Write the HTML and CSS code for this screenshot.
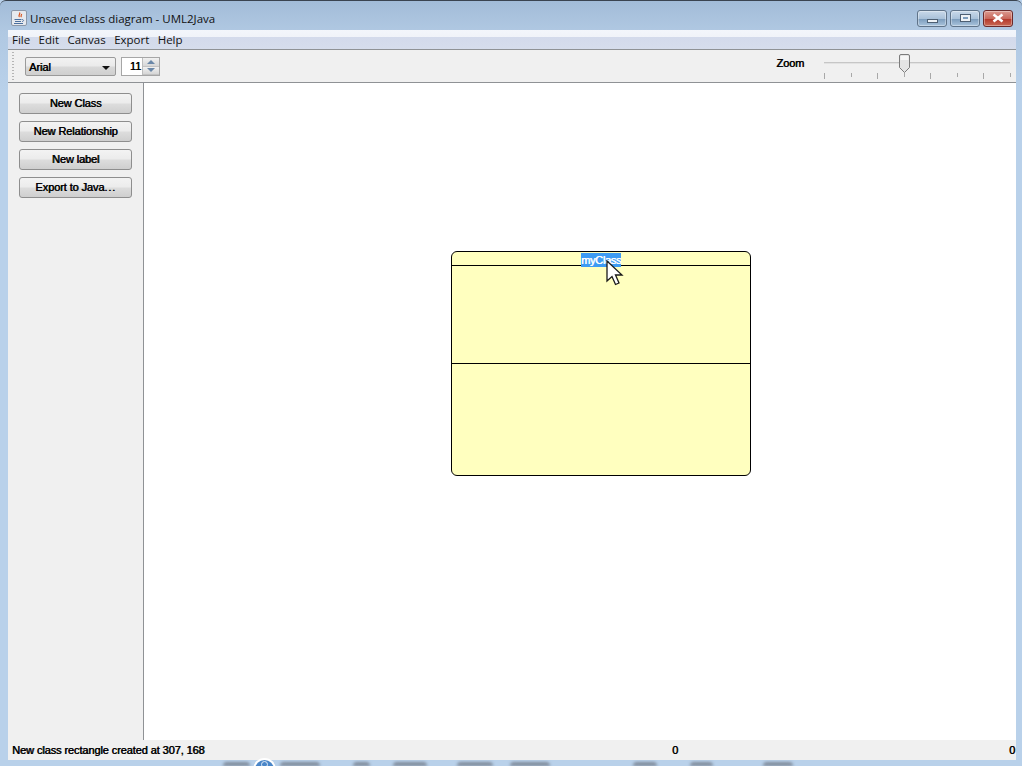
FILE: index.html
```html
<!DOCTYPE html>
<html lang="en">
<head>
    <meta charset="UTF-8">
    <title>Unsaved class diagram - UML2Java</title>
    <link rel="stylesheet" href="styles.css">
</head>
<body>

<div class="window">
    <div class="titlebar">
        <svg class="app-icon" width="16" height="16" viewBox="0 0 16 16">
            <rect x="0.5" y="0.5" width="15" height="15" rx="1.5" fill="#e6e9ee" stroke="#8b97a8"/>
            <path d="M8.5 2.5c1.5 1.5-2 3 0 4.5M10.5 4c.5 1-1.5 2 0 3" fill="none" stroke="#d8541e" stroke-width="1.2"/>
            <path d="M3.5 9.5h7M4 11.5h6M3 13.5h9" stroke="#4a6f9e" stroke-width="1"/>
            <path d="M11 9.5c2 0 2 2 0 2" fill="none" stroke="#4a6f9e"/>
        </svg>
        <span class="title-text">Unsaved class diagram - UML2Java</span>
        <div class="win-buttons">
            <div class="win-btn"><span class="min-glyph"></span></div>
            <div class="win-btn"><span class="max-glyph"></span></div>
            <div class="win-btn close-btn">
                <svg width="16" height="10" viewBox="0 0 16 10">
                    <path d="M3.5 1.500l9 7M12.500 1.500l-9 7" stroke="#fff" stroke-width="2.600"/>
                </svg>
            </div>
        </div>
    </div>

    <div class="menubar">
        <span>File</span>
        <span>Edit</span>
        <span>Canvas</span>
        <span>Export</span>
        <span>Help</span>
    </div>

    <div class="toolbar">
        <div class="grip"></div>
        <div class="font-select">
            <span>Arial</span>
            <span class="arrow-down"></span>
        </div>
        <div class="spinner">
            <span class="spin-value">11</span>
            <div class="spin-btns">
                <div class="spin-btn"><span class="spin-up"></span></div>
                <div class="spin-btn"><span class="spin-down"></span></div>
            </div>
        </div>
        <div class="zoom-label">Zoom</div>
        <div class="slider">
            <div class="slider-track"></div>
            <svg class="slider-thumb" width="11" height="19" viewBox="0 0 11 19">
                <path d="M.5 2Q.5.5 2 .5H9Q10.500 .5 10.500 2V13.500L5.500 18.500L.5 13.500Z" fill="#e4e4e4" stroke="#7b7b7b"/>
                <path d="M1.500 2H9.500V6H1.500Z" fill="#f6f6f6"/>
            </svg>
            <div class="ticks">
                <i></i><i class="minor"></i><i></i><i class="minor"></i><i></i><i class="minor"></i><i></i><i class="minor"></i>
            </div>
        </div>
    </div>

    <div class="main">
        <div class="sidebar">
            <button class="side-btn">New Class</button>
            <button class="side-btn">New Relationship</button>
            <button class="side-btn">New label</button>
            <button class="side-btn">Export to Java<span class="dots">...</span></button>
        </div>
        <div class="canvas">
            <div class="uml-class">
                <div class="uml-name"><span class="selected-name">myClass</span></div>
                <div class="uml-attrs"></div>
                <div class="uml-methods"></div>
            </div>
            <svg class="cursor" width="18" height="26" viewBox="0 0 18 26">
                <path d="M1 1V21L6 16.500L9.500 24.500L13 23L9.500 15H16Z" fill="#fff" stroke="#1a1a1a" stroke-width="1.300"/>
            </svg>
        </div>
    </div>

    <div class="statusbar">
        <span class="status-msg">New class rectangle created at 307, 168</span>
        <span class="status-x">0</span>
        <span class="status-y">0</span>
    </div>
</div>

<div class="desktop-strip">
    <i class="blob"></i>
    <i class="blob"></i>
    <i class="blob"></i>
    <i class="blob"></i>
    <i class="blob"></i>
    <i class="blob"></i>
    <i class="blob"></i>
    <i class="blob"></i>
    <i class="blob"></i>
</div>
<i class="orb"></i>

</body>
</html>
```

FILE: styles.css
```css
html, body {
    margin: 0;
    padding: 0;
    width: 1022px;
    height: 766px;
    overflow: hidden;
}

body {
    font-family: 'Liberation Sans', Arial, sans-serif;
    font-size: 12px;
    color: #000;
    background-color: #b9d1ea;
}

/* java draws these labels as a smeared regular weight, not a real bold */
.font-select, .spin-value, .zoom-label, .side-btn, .statusbar, .selected-name {
    font-family: 'Liberation Sans', Arial, sans-serif;
    font-size: 11px;
    font-weight: normal;
    letter-spacing: -0.1px;
    text-shadow: 0.6px 0 0 currentColor;
}

.window {
    height: 760px;
    display: flex;
    flex-direction: column;
    padding: 0 6px 0 8px;
    box-sizing: border-box;
    background: linear-gradient(to bottom, #a2bcd8 0, #b0c8e2 30px, #b9d1ea 90px);
    border-top: 1px solid #3a4450;
    border-radius: 6px 6px 0 0;
}

.titlebar {
    height: 29px;
    padding-top: 5px;
    box-sizing: border-box;
    display: flex;
    align-items: center;
    flex-shrink: 0;
    margin-left: 3px;
}

.app-icon {
    margin-right: 3px;
}

.title-text {
    font-family: 'Open Sans', 'Liberation Sans', sans-serif;
    font-size: 11.500px;
    color: #111;
}

.win-buttons {
    margin-left: auto;
    margin-right: 3px;
    display: flex;
    gap: 3px;
}

.win-btn {
    width: 28px;
    height: 15px;
    border: 1px solid #5f7389;
    border-radius: 3px;
    display: flex;
    align-items: center;
    justify-content: center;
    background: linear-gradient(to bottom, #c9d9ea 0, #aac2da 50%, #7d9dbd 55%, #a9c4dd 100%);
    box-shadow: inset 0 0 0 1px rgba(255, 255, 255, 0.35);
}

.close-btn {
    border-color: #6b2a2a;
    background: linear-gradient(to bottom, #dc9a90 0, #c9695c 50%, #b4392c 55%, #c96a55 100%);
}

.min-glyph {
    width: 9px;
    height: 2px;
    margin-top: 5px;
    background-color: #eef2f6;
    border: 1px solid #4d5f73;
}

.max-glyph {
    width: 5px;
    height: 2px;
    border: 2px solid #eef2f6;
    outline: 1px solid #4d5f73;
    background-color: #7d9dbd;
}

.menubar {
    height: 20px;
    box-sizing: border-box;
    display: flex;
    align-items: center;
    gap: 8.400px;
    flex-shrink: 0;
    padding-left: 4px;
    font-family: 'Open Sans', 'Liberation Sans', sans-serif;
    font-size: 11.500px;
    color: #111;
    background: linear-gradient(to bottom, #f3f6fb 0, #f0f3f9 35%, #d3daeb 38%, #d6ddec 100%);
    border-bottom: 1px solid #8f9295;
}

.toolbar {
    height: 33px;
    padding-top: 1px;
    display: flex;
    align-items: center;
    flex-shrink: 0;
    background-color: #f0f0f0;
    border-bottom: 1px solid #8f9295;
    box-sizing: border-box;
}

.grip {
    width: 2px;
    height: 29px;
    margin-left: 4px;
    background-image: linear-gradient(to bottom, #b5b5b5 50%, transparent 50%);
    background-size: 2px 3px;
}

.font-select {
    width: 81px;
    height: 17px;
    margin-left: 11px;
    padding: 0 5px 0 3px;
    display: flex;
    align-items: center;
    justify-content: space-between;
    border: 1px solid #9a9a9a;
    border-radius: 2px;
    background: linear-gradient(to bottom, #f2f2f2 0, #ebebeb 45%, #d8d8d8 55%, #cfcfcf 100%);
}

.arrow-down {
    width: 0;
    height: 0;
    border-left: 4px solid transparent;
    border-right: 4px solid transparent;
    border-top: 4px solid #111;
    margin-top: 2px;
}

.spinner {
    margin-left: 5px;
    width: 37px;
    height: 17px;
    display: flex;
    border: 1px solid #a6a6a6;
    background-color: #fff;
}

.spin-value {
    flex: 1;
    text-align: right;
    padding-right: 1px;
    line-height: 17px;
}

.spin-btns {
    width: 16px;
    display: flex;
    flex-direction: column;
    border-left: 1px solid #bdbdbd;
}

.spin-btn {
    flex: 1;
    display: flex;
    align-items: center;
    justify-content: center;
    background: linear-gradient(to bottom, #f1f1f1, #d6d6d6);
    border-bottom: 1px solid #c2c2c2;
}

.spin-up {
    border-left: 4px solid transparent;
    border-right: 4px solid transparent;
    border-bottom: 4px solid #6a87a8;
}

.spin-down {
    border-left: 4px solid transparent;
    border-right: 4px solid transparent;
    border-top: 4px solid #6a87a8;
}

.zoom-label {
    margin-left: auto;
    margin-top: -8px;
}

.slider {
    width: 187px;
    height: 31px;
    margin-left: 20px;
    margin-right: 5px;
    position: relative;
}

.slider-track {
    width: 186px;
    height: 2px;
    margin-top: 11px;
    background-color: #c6c6c6;
    border-bottom: 1px solid #e2e2e2;
    box-sizing: border-box;
}

.slider-thumb {
    position: absolute;
    left: 75px;
    top: 3px;
}

.ticks {
    display: flex;
    margin-top: 9px;
}

.ticks i {
    flex-shrink: 0;
    width: 1px;
    height: 6px;
    margin-right: 25.500px;
    background-color: #a8a8a8;
}

.ticks i.minor {
    height: 4px;
}

.main {
    flex: 1;
    display: flex;
    min-height: 0;
}

.sidebar {
    width: 136px;
    flex-shrink: 0;
    padding: 10px 0 0 11px;
    box-sizing: border-box;
    display: flex;
    flex-direction: column;
    gap: 7px;
    background-color: #f0f0f0;
    border-right: 1px solid #8f9295;
}

.side-btn {
    width: 113px;
    height: 21px;
    padding: 0 0 2px;
    color: #000;
    border: 1px solid #8e8e8e;
    border-radius: 3px;
    background: linear-gradient(to bottom, #f3f3f3 0, #ececec 45%, #dcdcdc 55%, #cfcfcf 100%);
}

.dots {
    letter-spacing: 0.8px;
}

.canvas {
    flex: 1;
    background-color: #fff;
    position: relative;
}

.uml-class {
    position: absolute;
    left: 307px;
    top: 168px;
    width: 300px;
    height: 225px;
    box-sizing: border-box;
    display: flex;
    flex-direction: column;
    border: 1px solid #000;
    border-radius: 6px;
    background-color: #ffffbf;
}

.uml-name {
    height: 13px;
    border-bottom: 1px solid #000;
    display: flex;
    justify-content: center;
}

.selected-name {
    height: 14px;
    margin-top: 1px;
    letter-spacing: -0.3px;
    line-height: 14px;
    color: #fff;
    background-color: #3d9bf3;
}

.uml-attrs {
    height: 97px;
    border-bottom: 1px solid #000;
}

.uml-methods {
    flex: 1;
}

.cursor {
    position: absolute;
    left: 462px;
    top: 177px;
}

.statusbar {
    height: 20px;
    flex-shrink: 0;
    display: flex;
    align-items: center;
    padding-left: 4px;
    background-color: #f0f0f0;
}

.status-msg {
    width: 660px;
}

.status-x {
    width: 337px;
}

.desktop-strip {
    height: 6px;
    display: flex;
    align-items: flex-end;
    overflow: hidden;
    background-color: #b9d1ea;
}

.blob {
    display: block;
    height: 4px;
    flex-shrink: 0;
    background-color: #808c9c;
    border-radius: 10px 10px 0 0;
    filter: blur(1.500px);
}

.blob:nth-child(1) { margin-left: 223px; width: 27px; }
.blob:nth-child(2) { margin-left: 30px; width: 40px; }
.blob:nth-child(3) { margin-left: 33px; width: 17px; }
.blob:nth-child(4) { margin-left: 23px; width: 34px; }
.blob:nth-child(5) { margin-left: 30px; width: 36px; }
.blob:nth-child(6) { margin-left: 17px; width: 40px; }
.blob:nth-child(7) { margin-left: 83px; width: 24px; }
.blob:nth-child(8) { margin-left: 33px; width: 23px; }
.blob:nth-child(9) { margin-left: 50px; width: 30px; }

/* start orb pokes up over the status bar */
.orb {
    position: absolute;
    left: 253px;
    top: 758px;
    width: 23px;
    height: 23px;
    box-sizing: border-box;
    border: 2px solid #fff;
    border-radius: 50%;
    background-color: #4a86c8;
}

.orb::after {
    content: "";
    display: block;
    width: 5px;
    height: 5px;
    margin: 1px auto 0;
    border: 1px solid #dfe9f5;
    border-radius: 50%;
}
```
